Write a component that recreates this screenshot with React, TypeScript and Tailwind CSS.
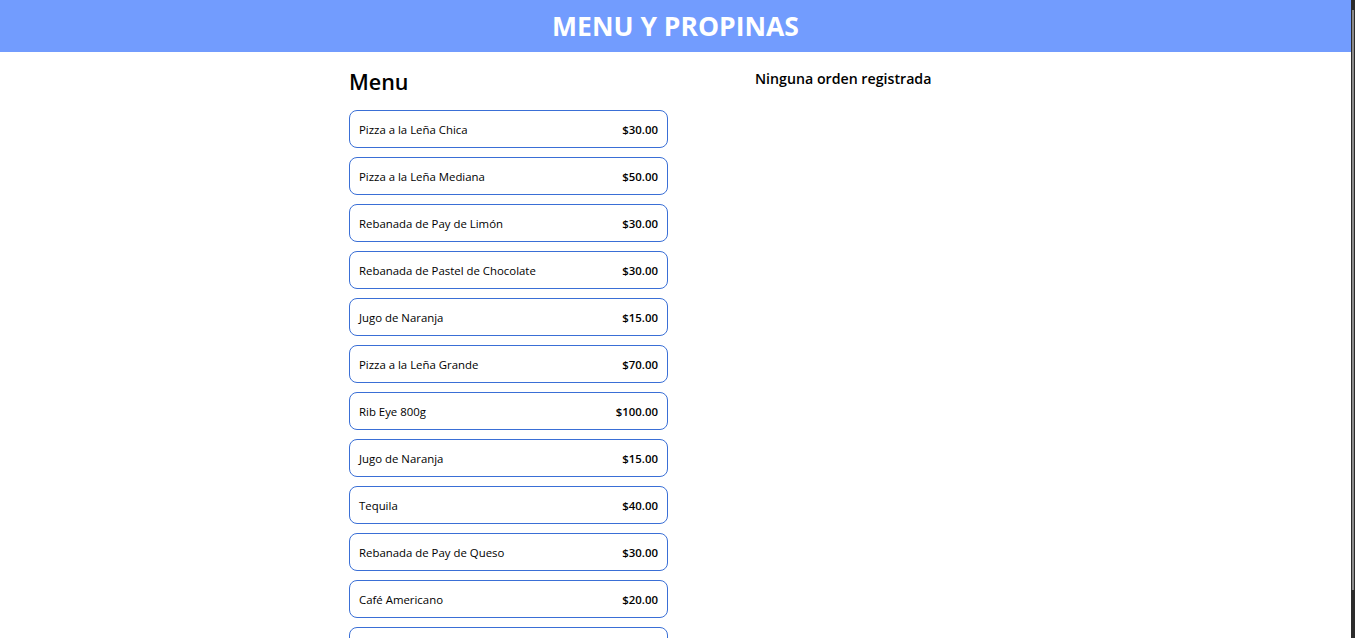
import React from "react";

const items = [
  { name: "Pizza a la Leña Chica", price: 30 },
  { name: "Pizza a la Leña Mediana", price: 50 },
  { name: "Rebanada de Pay de Limón", price: 30 },
  { name: "Rebanada de Pastel de Chocolate", price: 30 },
  { name: "Jugo de Naranja", price: 15 },
  { name: "Pizza a la Leña Grande", price: 70 },
  { name: "Rib Eye 800g", price: 100 },
  { name: "Jugo de Naranja", price: 15 },
  { name: "Tequila", price: 40 },
  { name: "Rebanada de Pay de Queso", price: 30 },
  { name: "Café Americano", price: 20 },
  { name: "Café Capuchino", price: 25 },
];

export default function App() {
  return (
    <div
      className="flex h-[638px] overflow-hidden bg-white text-black"
      style={{ fontFamily: '"Open Sans", "Noto Sans", sans-serif' }}
    >
      <div className="flex-1 overflow-hidden">
        <header className="flex h-[52px] items-center justify-center bg-[#729cfe]">
          <h1 className="text-[26.5px] font-bold leading-none text-white">MENU Y PROPINAS</h1>
        </header>
        <main className="mx-auto grid w-[653px] grid-cols-[406px_1fr] pt-[15px]">
          <section>
            <h2 className="text-[21.5px] font-semibold leading-[30px]">Menu</h2>
            <div className="mt-[13px] flex w-[319px] flex-col gap-[9px]">
              {items.map((it, i) => (
                <button
                  key={i}
                  className="flex h-[38px] items-center justify-between rounded-lg border border-[#3a6fd6] bg-white px-[9px] pt-[2px] text-[11.4px]"
                >
                  <span>{it.name}</span>
                  <span className="font-semibold">${it.price.toFixed(2)}</span>
                </button>
              ))}
            </div>
          </section>
          <section>
            <p className="pt-[2px] text-[14.2px] font-semibold leading-[20px]">Ninguna orden registrada</p>
          </section>
        </main>
      </div>
      <div className="flex w-[4px] flex-col bg-[#2b2b2b] px-px py-[10px]">
        <div className="h-[580px] bg-[#8a8a8a]" />
      </div>
    </div>
  );
}
